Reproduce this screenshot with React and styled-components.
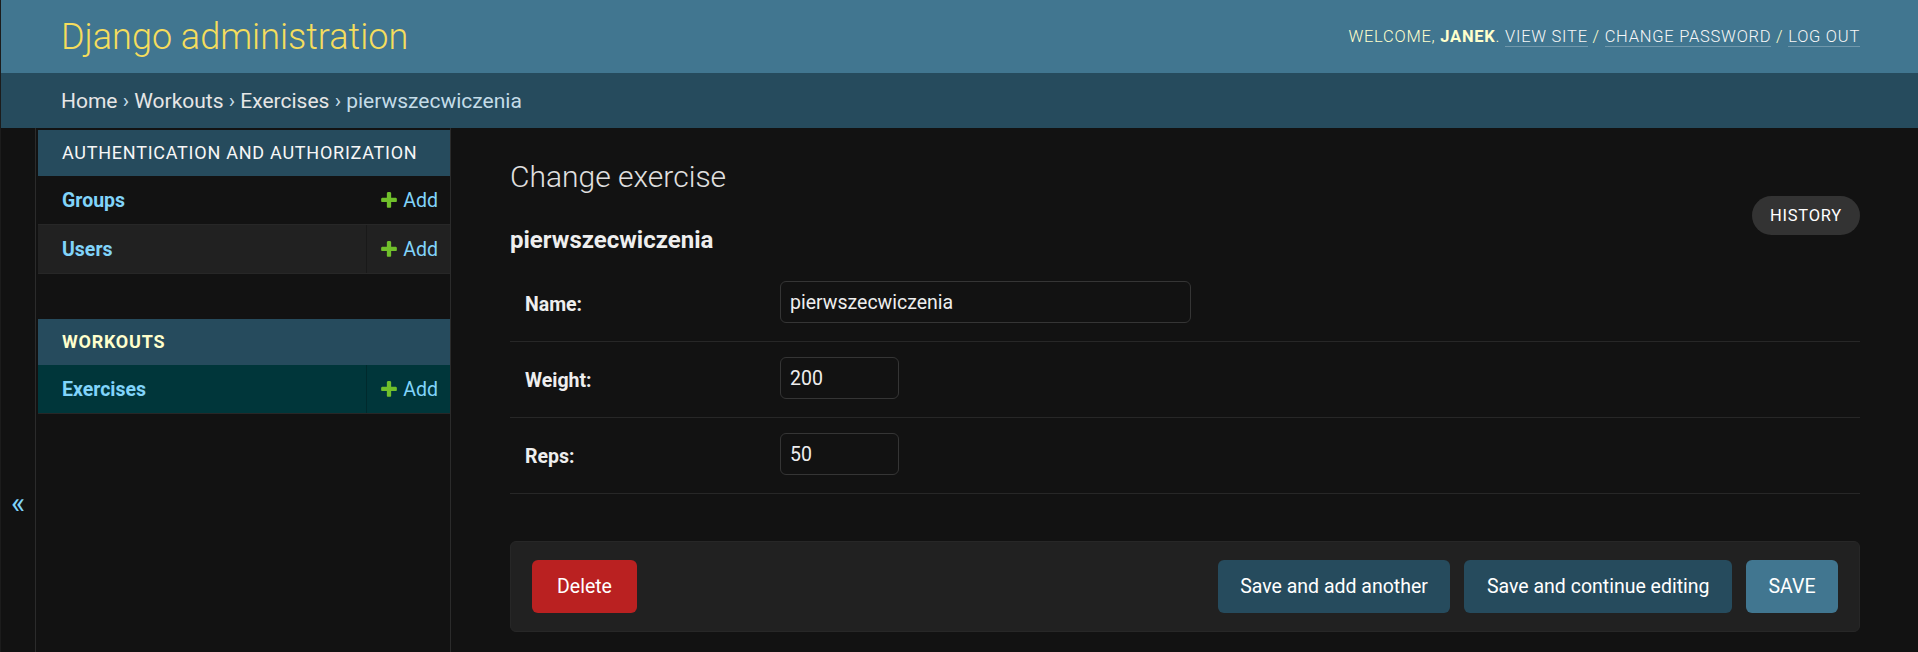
import React from 'react';
import styled, { createGlobalStyle } from 'styled-components';

const GlobalStyle = createGlobalStyle`
  html, body {
    margin: 0;
    padding: 0;
    background: #121212;
  }
  body {
    font-family: Roboto, "Noto Sans", "DejaVu Sans", sans-serif;
    color: #eeeeee;
    font-size: 21px;
  }
  *, *::before, *::after { box-sizing: border-box; }
`;

const Page = styled.div`
  min-height: 100vh;
  border-left: 1px solid #1c1c1c;
  display: flex;
  flex-direction: column;
`;

const Header = styled.header`
  height: 73px;
  padding: 0 58px 0 60px;
  display: flex;
  align-items: center;
  justify-content: space-between;
  background: #417690;
`;

const Branding = styled.h1`
  margin: 0;
  font-size: 36px;
  font-weight: 300;
  line-height: 42px;
  color: #f5dd5d;
`;

const UserTools = styled.div`
  font-size: 16.5px;
  font-weight: 300;
  letter-spacing: 0.75px;
  text-transform: uppercase;
  color: #ffffcc;
  strong { font-weight: 700; }
`;

const HeaderLink = styled.a`
  color: #f7f7f7;
  text-decoration: none;
  border-bottom: 1px solid rgba(255, 255, 255, 0.25);
`;

const Breadcrumbs = styled.nav`
  height: 55px;
  padding: 0 60px;
  display: flex;
  align-items: center;
  background: #264b5d;
  color: #c4dce8;
  font-size: 21px;
  a { color: #e6e6e6; text-decoration: none; }
`;

const Main = styled.div`
  flex: 1;
  display: flex;
`;

const ToggleNav = styled.button`
  flex: 0 0 35px;
  width: 35px;
  padding: 357px 0 0;
  border: 0;
  border-right: 1px solid #2b2b2b;
  background: #121212;
  color: #81d4fa;
  font-family: Roboto, sans-serif;
  font-size: 30px;
  line-height: 35px;
  display: flex;
  justify-content: center;
  align-items: flex-start;
`;

const Sidebar = styled.nav`
  flex: 0 0 415px;
  padding: 2px 0 0 2px;
  border-right: 1px solid #2b2b2b;
`;

const Module = styled.div`
  margin-bottom: 45px;
`;

const Caption = styled.div`
  height: 46px;
  padding: 0 12px 1px 24px;
  display: flex;
  align-items: center;
  background: #264b5d;
  font-size: 18px;
  letter-spacing: 0.75px;
  text-transform: uppercase;
  color: ${({ current }) => (current ? '#ffffcc' : '#f7f7f7')};
  font-weight: ${({ current }) => (current ? 700 : 400)};
`;

const ModelRow = styled.div`
  display: flex;
  border-bottom: 1px solid #272727;
  background: ${({ tone }) => tone || '#121212'};
`;

const ModelName = styled.a`
  flex: 1;
  padding: 13px 12px 11px 24px;
  line-height: 24px;
  font-size: 19.5px;
  font-weight: 700;
  color: #81d4fa;
  text-decoration: none;
`;

const AddCell = styled.a`
  padding: 13px 12px 11px;
  display: flex;
  align-items: center;
  border-left: 1px solid ${({ tone }) => (tone ? 'rgba(0, 0, 0, 0.22)' : 'transparent')};
  line-height: 24px;
  font-size: 19.5px;
  color: #81d4fa;
  text-decoration: none;
  white-space: nowrap;
  svg { margin: -3px 4px 0 0; }
`;

const Content = styled.main`
  flex: 1;
  padding: 31px 58px 30px 59px;
`;

const Title = styled.h1`
  margin: 0 0 1px;
  font-size: 30px;
  font-weight: 300;
  line-height: 36px;
  color: #e0e0e0;
`;

const ObjectHead = styled.div`
  display: flex;
  justify-content: space-between;
  align-items: flex-start;
`;

const ObjectName = styled.h2`
  margin: 30px 0 12px;
  font-size: 24px;
  font-weight: 700;
  line-height: 28px;
  color: #eeeeee;
`;

const HistoryLink = styled.a`
  height: 39px;
  padding: 0 18px;
  display: flex;
  align-items: center;
  border-radius: 20px;
  background: #333333;
  color: #ffffff;
  font-size: 16.5px;
  letter-spacing: 0.75px;
  text-transform: uppercase;
  text-decoration: none;
`;

const FormRow = styled.div`
  display: flex;
  padding: 15px 15px 18px;
  border-bottom: 1px solid #272727;
`;

const Label = styled.label`
  flex: 0 0 240px;
  margin-right: 15px;
  padding-top: 12px;
  font-size: 19.5px;
  font-weight: 700;
  line-height: 1.2;
  color: #eeeeee;
`;

const Input = styled.input`
  width: ${({ wide }) => (wide ? '411px' : '119px')};
  height: 42px;
  margin: 0;
  padding: 0 9px;
  border: 1px solid #353535;
  border-radius: 6px;
  background: #121212;
  color: #eeeeee;
  font-family: Roboto, sans-serif;
  font-size: 19.5px;
  outline: none;
`;

const SubmitRow = styled.div`
  margin-top: 47px;
  padding: 18px 21px;
  display: flex;
  gap: 14px;
  background: #212121;
  border: 1px solid #272727;
  border-radius: 6px;
`;

const Button = styled.button`
  height: 53px;
  padding: 0 ${({ variant }) => (variant === 'delete' ? '25px' : '22.5px')};
  border: 0;
  border-radius: 6px;
  background: ${({ variant }) =>
    variant === 'delete' ? '#ba2121' : variant === 'default' ? '#417690' : '#264b5d'};
  margin-right: ${({ variant }) => (variant === 'delete' ? 'auto' : '0')};
  color: #ffffff;
  font-family: Roboto, sans-serif;
  font-size: 19.5px;
`;

const PlusIcon = () => (
  <svg width="20" height="20" viewBox="0 0 1792 1792" aria-hidden="true">
    <path
      fill="#70bf2b"
      d="M1600 796v192q0 40-28 68t-68 28h-416v416q0 40-28 68t-68 28h-192q-40 0-68-28t-28-68v-416h-416q-40 0-68-28t-28-68v-192q0-40 28-68t68-28h416v-416q0-40 28-68t68-28h192q40 0 68 28t28 68v416h416q40 0 68 28t28 68z"
    />
  </svg>
);

const apps = [
  {
    name: 'Authentication and Authorization',
    models: [
      { name: 'Groups' },
      { name: 'Users', tone: '#212121' },
    ],
  },
  {
    name: 'Workouts',
    current: true,
    models: [{ name: 'Exercises', tone: '#00363a' }],
  },
];

const fields = [
  { label: 'Name:', value: 'pierwszecwiczenia', wide: true },
  { label: 'Weight:', value: '200' },
  { label: 'Reps:', value: '50' },
];

const App = () => (
  <Page>
    <GlobalStyle />
    <Header>
      <Branding>Django administration</Branding>
      <UserTools>
        Welcome, <strong>janek</strong>. <HeaderLink href="#">View site</HeaderLink> /{' '}
        <HeaderLink href="#">Change password</HeaderLink> / <HeaderLink href="#">Log out</HeaderLink>
      </UserTools>
    </Header>
    <Breadcrumbs>
      <a href="#">Home</a>&nbsp;›&nbsp;<a href="#">Workouts</a>&nbsp;›&nbsp;<a href="#">Exercises</a>
      &nbsp;›&nbsp;pierwszecwiczenia
    </Breadcrumbs>
    <Main>
      <ToggleNav>«</ToggleNav>
      <Sidebar>
        {apps.map((app) => (
          <Module key={app.name}>
            <Caption current={app.current}>{app.name}</Caption>
            {app.models.map((m) => (
              <ModelRow key={m.name} tone={m.tone}>
                <ModelName href="#">{m.name}</ModelName>
                <AddCell href="#" tone={m.tone}>
                  <PlusIcon />
                  Add
                </AddCell>
              </ModelRow>
            ))}
          </Module>
        ))}
      </Sidebar>
      <Content>
        <Title>Change exercise</Title>
        <ObjectHead>
          <ObjectName>pierwszecwiczenia</ObjectName>
          <HistoryLink href="#">History</HistoryLink>
        </ObjectHead>
        {fields.map((f) => (
          <FormRow key={f.label}>
            <Label>{f.label}</Label>
            <Input wide={f.wide} defaultValue={f.value} />
          </FormRow>
        ))}
        <SubmitRow>
          <Button variant="delete">Delete</Button>
          <Button>Save and add another</Button>
          <Button>Save and continue editing</Button>
          <Button variant="default">SAVE</Button>
        </SubmitRow>
      </Content>
    </Main>
  </Page>
);

export default App;
